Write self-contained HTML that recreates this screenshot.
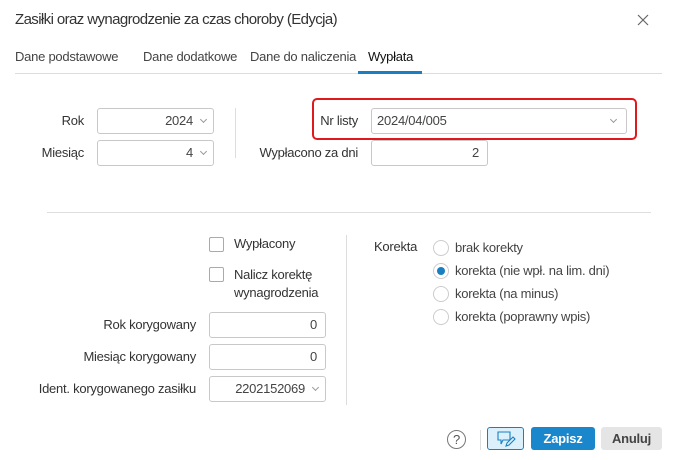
<!DOCTYPE html>
<html><head><meta charset="utf-8"><style>
*{box-sizing:border-box;margin:0;padding:0}
body{width:678px;height:460px;background:#fff;font-family:"Liberation Sans",sans-serif;color:#333;position:relative;overflow:hidden;font-size:13px;letter-spacing:-0.25px}
.a{position:absolute}
.lbl{position:absolute;text-align:right;white-space:nowrap;line-height:16px}
.inp{position:absolute;border:1px solid #c8c8c8;border-radius:3px;height:26px;line-height:24px;text-align:right;padding-right:8px;font-size:13px;color:#444}
.sel{padding-right:20px}
.chev{position:absolute;right:7px;top:8px;width:5px;height:5px;border-right:1px solid #999;border-bottom:1px solid #999;transform:rotate(45deg)}
.cb{position:absolute;width:15px;height:15px;border:1px solid #aaa;border-radius:2px}
.rd{position:absolute;width:16px;height:16px;border:1px solid #ccc;border-radius:50%}
.t{position:absolute;white-space:nowrap;line-height:16px}
</style></head><body>
<div class="t" style="left:15px;top:12px;font-size:15px;color:#333;letter-spacing:-0.6px">Zasiłki oraz wynagrodzenie za czas choroby (Edycja)</div>
<svg class="a" style="left:637px;top:14px" width="12" height="12"><path d="M1 1L11 11M11 1L1 11" stroke="#666" stroke-width="1.2"/></svg>
<div class="t" style="left:15px;top:49px;color:#444">Dane podstawowe</div>
<div class="t" style="left:143px;top:49px;color:#444">Dane dodatkowe</div>
<div class="t" style="left:250px;top:49px;color:#444">Dane do naliczenia</div>
<div class="t" style="left:368px;top:49px;color:#111">Wypłata</div>
<div class="a" style="left:15px;top:73px;width:647px;height:1px;background:#ddd"></div>
<div class="a" style="left:358px;top:71px;width:64px;height:3px;background:#1a7fc0"></div>

<div class="lbl" style="right:594px;top:113px">Rok</div>
<div class="inp sel" style="left:97px;top:108px;width:117px">2024<span class="chev"></span></div>
<div class="lbl" style="right:594px;top:145px">Miesiąc</div>
<div class="inp sel" style="left:97px;top:140px;width:117px">4<span class="chev"></span></div>
<div class="a" style="left:235px;top:108px;width:1px;height:50px;background:#ddd"></div>

<div class="a" style="left:312px;top:98px;width:325px;height:42px;border:2px solid #e0191e;border-radius:5px"></div>
<div class="lbl" style="right:320px;top:113px">Nr listy</div>
<div class="inp" style="left:371px;top:108px;width:256px;text-align:left;padding-left:5px">2024/04/005<span class="chev" style="right:10px"></span></div>
<div class="lbl" style="right:320px;top:145px">Wypłacono za dni</div>
<div class="inp" style="left:371px;top:140px;width:117px">2</div>

<div class="a" style="left:47px;top:212px;width:604px;height:1px;background:#ddd"></div>

<div class="cb" style="left:209px;top:237px"></div>
<div class="t" style="left:234px;top:236px">Wypłacony</div>
<div class="cb" style="left:209px;top:267px"></div>
<div class="t" style="left:234px;top:266px;line-height:18px">Nalicz korektę<br>wynagrodzenia</div>

<div class="lbl" style="right:482px;top:317px">Rok korygowany</div>
<div class="inp" style="left:209px;top:312px;width:117px">0</div>
<div class="lbl" style="right:482px;top:349px">Miesiąc korygowany</div>
<div class="inp" style="left:209px;top:344px;width:117px">0</div>
<div class="lbl" style="right:482px;top:381px">Ident. korygowanego zasiłku</div>
<div class="inp sel" style="left:209px;top:376px;width:117px">2202152069<span class="chev"></span></div>
<div class="a" style="left:346px;top:235px;width:1px;height:170px;background:#ddd"></div>

<div class="t" style="left:374px;top:239px">Korekta</div>
<div class="rd" style="left:433px;top:240px"></div><div class="t" style="left:455px;top:240px;color:#444">brak korekty</div>
<div class="rd" style="left:433px;top:263px"><div class="a" style="left:3px;top:3px;width:8px;height:8px;border-radius:50%;background:#1a7fc0"></div></div><div class="t" style="left:455px;top:263px;color:#444">korekta (nie wpł. na lim. dni)</div>
<div class="rd" style="left:433px;top:286px"></div><div class="t" style="left:455px;top:286px;color:#444">korekta (na minus)</div>
<div class="rd" style="left:433px;top:309px"></div><div class="t" style="left:455px;top:309px;color:#444">korekta (poprawny wpis)</div>

<div class="a" style="left:447px;top:430px;width:19px;height:19px;border:1px solid #777;border-radius:50%;text-align:center;line-height:17px;font-size:13px;color:#555">?</div>
<div class="a" style="left:480px;top:430px;width:1px;height:20px;background:#ddd"></div>
<div class="a" style="left:487px;top:427px;width:37px;height:23px;border:1px solid #1a7fc0;border-radius:3px;background:#dcf0fb">
<svg class="a" style="left:9px;top:3px" width="20" height="17"><path d="M1 1H13V9H6L4 13V9H1Z" fill="none" stroke="#1a7fc0" stroke-width="1.1"/><path d="M9 15L10 12L16 6L18 8L12 14Z" fill="none" stroke="#1a7fc0" stroke-width="1.1"/></svg></div>
<div class="a" style="left:531px;top:427px;width:64px;height:23px;background:#1a86cc;border-radius:3px;color:#fff;font-weight:bold;text-align:center;line-height:23px">Zapisz</div>
<div class="a" style="left:601px;top:427px;width:61px;height:23px;background:#e5e5e5;border-radius:3px;color:#444;font-weight:bold;text-align:center;line-height:23px">Anuluj</div>
</body></html>
